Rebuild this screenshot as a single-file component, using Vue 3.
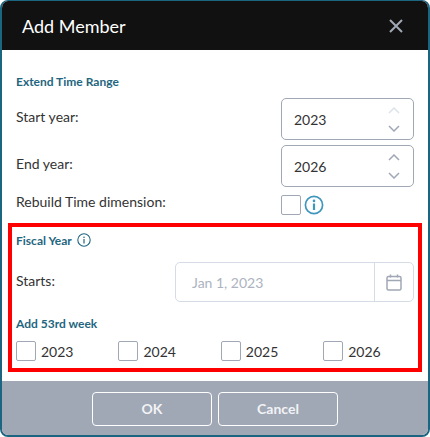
<script setup>
const years = [2023, 2024, 2025, 2026]
const ranges = [
  { label: 'Start year:', value: 2023, upFaded: true },
  { label: 'End year:', value: 2026, upFaded: false }
]
</script>

<template>
  <div class="dialog">
    <header class="head">
      <h1>Add Member</h1>
      <svg class="close" width="16" height="16" viewBox="0 0 16 16">
        <path d="M2 2 L14 14 M14 2 L2 14" stroke="#a0a7b5" stroke-width="2" fill="none" />
      </svg>
    </header>

    <main class="body">
      <section class="extend">
        <h2 class="section-title">Extend Time Range</h2>
        <div v-for="r in ranges" :key="r.label" class="range-row">
          <span class="label">{{ r.label }}</span>
          <div class="spinner">
            <span class="value">{{ r.value }}</span>
            <div class="arrows">
              <svg width="12" height="7" viewBox="0 0 12 7">
                <path d="M1 6 L6 1 L11 6" :stroke="r.upFaded ? '#dde2e9' : '#a0a7b5'" stroke-width="1.5" fill="none" />
              </svg>
              <svg width="12" height="7" viewBox="0 0 12 7">
                <path d="M1 1 L6 6 L11 1" stroke="#a0a7b5" stroke-width="1.5" fill="none" />
              </svg>
            </div>
          </div>
        </div>
        <div class="rebuild-row">
          <span class="label">Rebuild Time dimension:</span>
          <div class="rebuild-controls">
            <span class="check"></span>
            <svg width="20" height="20" viewBox="0 0 20 20">
              <circle cx="10" cy="10" r="8.6" stroke="#3f97bd" stroke-width="1.7" fill="none" />
              <circle cx="10" cy="5.9" r="1.3" fill="#3f97bd" />
              <path d="M10 8.6 V15" stroke="#3f97bd" stroke-width="2.2" />
            </svg>
          </div>
        </div>
      </section>

      <section class="fiscal">
        <div class="fiscal-title">
          <h2 class="section-title">Fiscal Year</h2>
          <svg class="fiscal-info" width="14" height="14" viewBox="0 0 14 14">
            <circle cx="7" cy="7" r="6.2" stroke="#1f6680" stroke-width="1.1" fill="none" />
            <circle cx="7" cy="4.2" r="0.8" fill="#1f6680" />
            <path d="M7 6 V10.4" stroke="#1f6680" stroke-width="1.2" />
          </svg>
        </div>
        <div class="starts-row">
          <span class="label">Starts:</span>
          <div class="date">
            <span class="date-value">Jan 1, 2023</span>
            <div class="date-btn">
              <svg width="16" height="17" viewBox="0 0 16 17">
                <rect x="1" y="2.5" width="14" height="13.5" rx="1.5" stroke="#a0a7b5" stroke-width="1.5" fill="none" />
                <path d="M1 6.5 H15 M4.5 0.5 V3.5 M11.5 0.5 V3.5" stroke="#a0a7b5" stroke-width="1.5" fill="none" />
              </svg>
            </div>
          </div>
        </div>
        <h2 class="section-title week-title">Add 53rd week</h2>
        <div class="weeks">
          <label v-for="y in years" :key="y" class="week">
            <span class="check"></span>
            <span class="year">{{ y }}</span>
          </label>
        </div>
      </section>
    </main>

    <footer class="foot">
      <button class="btn">OK</button>
      <button class="btn">Cancel</button>
    </footer>
  </div>
</template>

<style>
html,
body {
  margin: 0;
  background: #fff;
}
</style>

<style scoped>
.dialog {
  box-sizing: border-box;
  width: 430px;
  height: 437px;
  display: flex;
  flex-direction: column;
  border: 2px solid #1b6580;
  border-top-width: 1px;
  border-radius: 8px;
  overflow: hidden;
  background: #fff;
  font-family: Lato, sans-serif;
  color: #333;
}

.head {
  height: 49px;
  flex: none;
  display: flex;
  align-items: center;
  justify-content: space-between;
  padding: 0 24px 0 20px;
  background: #111;
}

.head h1 {
  margin: 0;
  font-size: 18px;
  font-weight: 400;
  color: #fff;
}

.body {
  flex: 1;
  display: flex;
  flex-direction: column;
}

.extend {
  height: 173px;
  flex: none;
  padding: 25px 14px 0;
  box-sizing: border-box;
}

.section-title {
  margin: 0;
  font-size: 12px;
  line-height: 14px;
  font-weight: 700;
  color: #1f6680;
}

.label {
  font-size: 14px;
  color: #333;
}

.range-row {
  display: flex;
  justify-content: space-between;
  align-items: flex-start;
  margin-bottom: 5px;
  line-height: 38px;
}

.extend .section-title {
  margin-bottom: 9px;
}

.spinner {
  box-sizing: border-box;
  width: 133px;
  height: 42px;
  display: flex;
  align-items: center;
  justify-content: space-between;
  padding: 0 13px 0 12px;
  border: 1px solid #a0a7b5;
  border-radius: 5px;
}

.value {
  font-size: 14px;
  line-height: 1;
  padding-top: 2px;
}

.arrows {
  display: flex;
  flex-direction: column;
  gap: 11px;
}

.arrows svg {
  display: block;
}

.rebuild-row {
  display: flex;
  align-items: center;
  margin-top: 8px;
  height: 20px;
}

.rebuild-row .label {
  width: 265px;
  margin-bottom: 8px;
}

.rebuild-controls {
  display: flex;
  align-items: center;
  gap: 3px;
}

.check {
  display: block;
  box-sizing: border-box;
  width: 20px;
  height: 20px;
  flex: none;
  background: #fff;
  border: 1px solid #a0a7b5;
  border-radius: 2px;
}

.fiscal {
  box-sizing: border-box;
  width: 414px;
  height: 149px;
  margin-left: 6px;
  padding: 6px 4px 0 4px;
  border: 4px solid #f00;
}

.fiscal-title {
  display: flex;
  align-items: center;
  gap: 5px;
  height: 16px;
}

.fiscal-info {
  align-self: flex-start;
}

.starts-row {
  display: flex;
  align-items: center;
  justify-content: space-between;
  margin-top: 13px;
  height: 40px;
}

.starts-row .label {
  padding-bottom: 4px;
}

.date {
  box-sizing: border-box;
  width: 239px;
  height: 40px;
  display: flex;
  border: 1px solid #d5dce5;
  border-radius: 5px;
}

.date-value {
  flex: 1;
  padding-left: 16px;
  font-size: 14px;
  line-height: 40px;
  color: #adb3bf;
}

.date-btn {
  width: 38px;
  display: flex;
  align-items: center;
  justify-content: center;
  border-left: 1px solid #d5dce5;
}

.week-title {
  margin-top: 15px;
}

.weeks {
  display: grid;
  grid-template-columns: repeat(4, 102.4px);
  margin-top: 10px;
}

.week {
  display: flex;
  align-items: center;
  gap: 5px;
}

.year {
  font-size: 14px;
  color: #333;
}

.foot {
  height: 55px;
  flex: none;
  margin-top: 9px;
  display: flex;
  justify-content: center;
  align-items: center;
  gap: 6px;
  background: #a0a7b5;
}

.btn {
  box-sizing: border-box;
  width: 120px;
  height: 34px;
  border: 1px solid #fff;
  border-radius: 4px;
  background: transparent;
  color: #f2f3f5;
  font-family: Lato, sans-serif;
  font-size: 14px;
  font-weight: 700;
}
</style>
